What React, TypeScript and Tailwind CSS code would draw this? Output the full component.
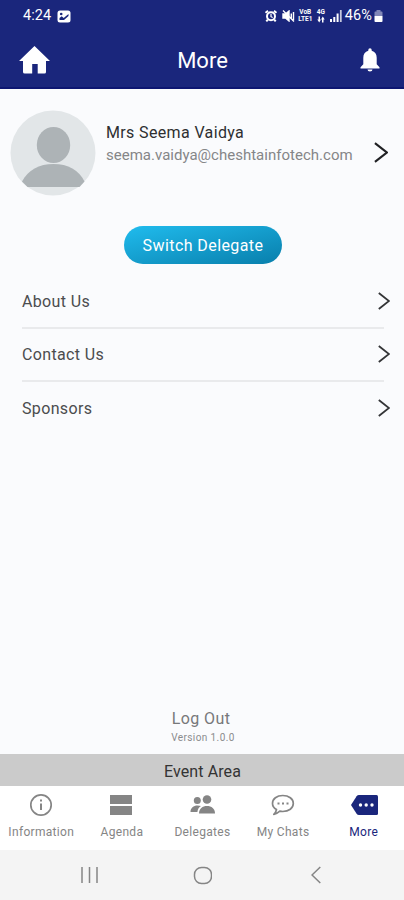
import React from "react";
import clsx from "clsx";

const menuItems = ["About Us", "Contact Us", "Sponsors"];

const Chevron = ({ className }: { className?: string }) => (
  <svg viewBox="0 0 12 18" preserveAspectRatio="none" className={className} fill="none" stroke="currentColor" strokeWidth="1.8">
    <path d="M.8 1 11 9 .8 17" />
  </svg>
);

const StatusBar = () => (
  <div className="flex h-8 items-center justify-between pl-[23px] pr-[21px] text-[14.5px] text-white">
    <div className="flex items-center">
      <span className="w-[34px] tracking-[0.1px]">4:24</span>
      <svg viewBox="0 0 14 13" className="h-[13px] w-[14px]">
        <rect x="0.5" y="0.5" width="13" height="12" rx="2.5" fill="currentColor" />
        <circle cx="4.2" cy="4" r="1.3" fill="#1a267c" />
        <path d="M2.5 10V8l2.2-1.7 2 1.7L11.5 4v2L7 10z" fill="#1a267c" />
      </svg>
    </div>
    <div className="flex items-center">
      <svg viewBox="0 0 12 12" className="mr-[5px] h-3 w-3" fill="none" stroke="currentColor" strokeWidth="2">
        <circle cx="6" cy="6.3" r="4" />
        <path d="M.5 2.8 3 .9M9 .9l2.5 1.9M2.8 9.6 1.3 11.4M9.2 9.6l1.5 1.8" />
        <path d="M6 4v2.7l1.7.8" strokeWidth="1.2" />
      </svg>
      <svg viewBox="0 0 13 12" className="mr-[3px] h-3 w-[13px]" fill="none" stroke="currentColor" strokeWidth="1.4">
        <path d="M1 4h2.5L7 1v10L3.5 8H1z" fill="currentColor" />
        <path d="M9.3 3.5v5M11.5 2v8M1 .5l11 11" />
      </svg>
      <span className="mr-[3px] flex w-[15px] flex-col items-center text-[6.5px] font-bold leading-[7px]">
        <span>VoB</span>
        <span>LTE1</span>
      </span>
      <span className="mr-1 flex w-[10px] flex-col items-center text-[6.5px] font-bold leading-[7px]">
        <span>4G</span>
        <svg viewBox="0 0 8 6" className="h-[7px] w-2" fill="currentColor">
          <path d="M1.5 0h1.5v3h1L2.2 6 .3 3h1.2zM5.8 0l1.9 3H6.5v3H5V3H4z" />
        </svg>
      </span>
      <svg viewBox="0 0 12 12" className="mr-[3px] h-3 w-3" fill="currentColor">
        <path d="M0 9h2v3H0zM3.3 7h2v5h-2zM6.6 3.5h2V12h-2z" />
        <path d="M9.9 0h1.8v12H9.9z" opacity=".75" />
      </svg>
      <span className="mr-[2px] tracking-[0.1px]">46%</span>
      <svg viewBox="0 0 9 12" className="h-3 w-[9px]" fill="currentColor">
        <path d="M2.5 0h4v1.5h1.2q.8 0 .8 1V6h-8V2.5q0-1 .8-1h1.2z" opacity=".45" />
        <path d="M.5 6h8v5q0 1-.8 1H1.3q-.8 0-.8-1z" />
      </svg>
    </div>
  </div>
);

const Header = () => (
  <header className="h-[89px] shrink-0 border-b-2 border-[#0d1672] bg-[#1a267c]">
    <StatusBar />
    <div className="grid h-14 grid-cols-[1fr_auto_1fr] items-center px-[19px] text-white">
      <svg viewBox="0 0 31 28" className="h-7 w-[31px]" fill="currentColor">
        <path d="M15.5 0 31 15h-4v11q0 1.5-1.5 1.5h-6.800V18h-5.500v9.500H5.800Q4 27.500 4 26V15H0z" />
      </svg>
      <h1 className="pl-px pt-px text-[22px] leading-7">More</h1>
      <svg viewBox="0 0 20 24" className="mr-[5px] h-6 w-5 justify-self-end" fill="currentColor">
        <path d="M8.3 2.8V2a1.7 1.7 0 0 1 3.4 0v.8c3.3.8 5 3.6 5 7v6.5L19.500 19.200v1.300H.5v-1.300l2.800-2.900V9.800c0-3.400 1.700-6.200 5-7zM7.500 21.500h5a2.500 2 0 0 1-5 0z" />
      </svg>
    </div>
  </header>
);

const Profile = () => (
  <section className="flex h-[128px] shrink-0 items-center pl-[10px] pr-4">
    <svg viewBox="0 0 86 86" className="h-[86px] w-[86px]">
      <circle cx="43" cy="43" r="42.5" fill="#e2e6e8" />
      <ellipse cx="43.5" cy="35" rx="16.7" ry="18" fill="#adb3b6" />
      <path d="M12 71.5C18 60 29 54 43.5 54S69 60 74.5 71.5L69.5 77H17.5z" fill="#adb3b6" />
    </svg>
    <div className="mb-[19px] ml-[10px] flex-1">
      <p className="text-base leading-[23px] tracking-[0.36px] text-[#2e2f31]">Mrs Seema Vaidya</p>
      <p className="text-[15px] leading-[23px] tracking-[0.01px] text-[#858688]">seema.vaidya@cheshtainfotech.com</p>
    </div>
    <Chevron className="mb-px h-[21px] w-[14px] text-[#202124]" />
  </section>
);

const iconInfo = (
  <svg viewBox="0 0 24 24" className="mr-px h-6 w-6" fill="none" stroke="currentColor" strokeWidth="1.7">
    <circle cx="12" cy="12" r="10.2" />
    <path d="M12 10.5V17M12 6.5v2" strokeWidth="2" />
  </svg>
);

const iconAgenda = (
  <svg viewBox="0 0 22 20" className="mr-px h-5 w-[22px]" fill="currentColor">
    <path d="M0 0h22v9H0zM0 11h22v9H0z" />
  </svg>
);

const iconPeople = (
  <svg viewBox="0 0 25 19" className="h-[19px] w-[25px]" fill="currentColor">
    <circle cx="7.3" cy="5.5" r="3.5" />
    <circle cx="17" cy="4.5" r="4.3" />
    <path d="M.5 17c0-4 3-6.5 7-6.5 1.3 0 2.5.2 3.5.6-2 1.2-3.2 3-3.6 5.900z" />
    <path d="M9 18.5c0-5 3.5-7.5 8-7.5s8 2.5 8 7.5z" />
  </svg>
);

const iconChat = (
  <svg viewBox="0 0 24 22" className="h-[22px] w-6" fill="none" stroke="currentColor" strokeWidth="1.7" strokeLinejoin="round">
    <path d="M5.5 15.5C2.8 14 1.5 12 1.5 9.5c0-4.6 4.3-8 10.3-8s10.500 3.400 10.500 8-4.500 8-10.500 8c-1 0-2-.1-3-.3-1.800 1.700-3.800 2.700-6 3.100 1.500-1.300 2.400-3 2.700-4.800z" />
    <path d="M6.5 9.5h2M11 9.5h2M15.5 9.5h2" strokeWidth="2" />
  </svg>
);

const iconMore = (
  <svg viewBox="0 0 27 20" className="ml-[2px] h-5 w-[27px]" fill="currentColor">
    <path d="M8 0h17.5q1.5 0 1.5 1.5v17q0 1.5-1.5 1.5H8q-1.5 0-2.4-1.3L0 10l5.6-8.700Q6.500 0 8 0z" />
    <g fill="white">
      <circle cx="9.5" cy="10" r="1.7" />
      <circle cx="15.2" cy="10" r="1.7" />
      <circle cx="21" cy="10" r="1.7" />
    </g>
  </svg>
);

const tabs = [
  { label: "Information", icon: iconInfo },
  { label: "Agenda", icon: iconAgenda },
  { label: "Delegates", icon: iconPeople },
  { label: "My Chats", icon: iconChat },
  { label: "More", icon: iconMore, active: true },
];

const TabBar = () => (
  <nav className="grid h-16 shrink-0 grid-cols-5 bg-white pl-px pt-[5px]">
    {tabs.map((tab) => (
      <div key={tab.label} className={clsx("flex flex-col items-center", tab.active ? "text-[#1a267c]" : "text-[#858585]")}>
        <div className="flex h-[27px] items-center">{tab.icon}</div>
        <span className="mt-[5px] whitespace-nowrap text-xs leading-[18px] tracking-[0.32px]">{tab.label}</span>
      </div>
    ))}
  </nav>
);

const SystemNav = () => (
  <div className="grid h-[50px] shrink-0 grid-cols-[1fr_auto_1fr] items-center bg-[#f4f4f4] px-[81px] text-[#858585]">
    <svg viewBox="0 0 17 18" className="h-[18px] w-[17px]" fill="none" stroke="currentColor" strokeWidth="1.5">
      <path d="M1 1v16M8.5 1v16M16 1v16" />
    </svg>
    <svg viewBox="0 0 19 19" className="h-[19px] w-[19px]" fill="none" stroke="currentColor" strokeWidth="1.5">
      <rect x="1.5" y="1.5" width="17" height="16" rx="7" />
    </svg>
    <svg viewBox="0 0 10 18" className="mr-[2px] h-[18px] w-[10px] justify-self-end" fill="none" stroke="currentColor" strokeWidth="1.5">
      <path d="M9.3 1 1 9l8.3 8" />
    </svg>
  </div>
);

const App = () => {
  return (
    <div className="flex h-screen w-full flex-col overflow-hidden bg-[#fafbfd] font-['Roboto',sans-serif]">
      <Header />
      <Profile />
      <main className="flex flex-1 flex-col pt-[9px]">
        <button className="ml-[124px] h-[38px] w-[158px] rounded-full bg-gradient-to-br from-[#20bcee] to-[#087fac] pt-[2px] text-base tracking-[0.42px] text-white">
          Switch Delegate
        </button>
        <ul className="mt-[12px]">
          {menuItems.map((item, i) => (
            <li
              key={item}
              className={clsx("ml-[22px] mr-5 flex items-center justify-between text-[#4b4c4e]", i < menuItems.length - 1 ? "h-[53px] border-b-2 border-[#e9eaec]" : "h-[52px]")}
            >
              <span className="pt-px text-base tracking-[0.35px]">{item}</span>
              <Chevron className="-mr-[6px] mb-px h-[18px] w-3 text-[#333436]" />
            </li>
          ))}
        </ul>
        <div className="mt-auto flex flex-col items-center pb-[9px] text-[#77787a]">
          <p className="pr-[2px] text-base leading-5 tracking-[0.4px]">Log Out</p>
          <p className="mt-[2px] pl-[2px] text-[10px] leading-[14px] tracking-[0.4px] text-[#8a8b8d]">Version 1.0.0</p>
        </div>
      </main>
      <div className="flex h-8 shrink-0 items-center justify-center bg-[#cbcbcb] pl-px pt-[3px] text-base tracking-[0.1px] text-[#343434]">Event Area</div>
      <TabBar />
      <SystemNav />
    </div>
  );
};

export default App;
